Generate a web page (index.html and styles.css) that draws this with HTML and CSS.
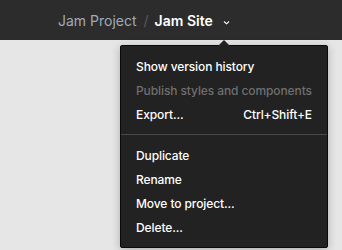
FILE: index.html
```html
<!DOCTYPE html>
<html>
<head>
<meta charset="utf-8">
<link rel="stylesheet" href="styles.css">
</head>
<body>
<header class="topbar">
  <span class="crumb">Jam Project</span>
  <span class="sep">/</span>
  <span class="current">Jam Site</span>
  <svg class="chev" width="7" height="5" viewBox="0 0 7 5"><path d="M1 1.5 L3.5 3.8 L6 1.5" fill="none" stroke="#fff" stroke-width="1.1"/></svg>
</header>
<main class="canvas">
  <div class="menu">
    <span class="arrow"></span>
    <div class="item">Show version history</div>
    <div class="item disabled">Publish styles and components</div>
    <div class="item"><span>Export...</span><span class="kbd">Ctrl+Shift+E</span></div>
    <div class="divider"></div>
    <div class="item">Duplicate</div>
    <div class="item">Rename</div>
    <div class="item">Move to project...</div>
    <div class="item">Delete...</div>
  </div>
</main>
</body>
</html>
```
FILE: styles.css
```css
* { box-sizing: border-box; }
html, body { margin: 0; padding: 0; }
body {
  width: 342px;
  height: 250px;
  overflow: hidden;
  background: #e6e6e6;
  font-family: Inter, "Liberation Sans", sans-serif;
}
.topbar {
  height: 40px;
  background: #2c2c2c;
  display: flex;
  align-items: center;
  padding-left: 58px;
  font-size: 14px;
}
.crumb { color: #9fabb7; }
.sep { color: #5a5a5a; margin: 0 6px 0 7px; }
.current { color: #fff; font-weight: 600; }
.chev { margin-left: 10px; margin-top: 5px; }
.canvas {
  padding: 5px 0 0 120px;
}
.menu {
  position: relative;
  width: 208px;
  background: #222222;
  border: 1px solid #0a0a0a;
  border-radius: 2px;
  box-shadow: 0 2px 8px rgba(0,0,0,0.25);
  padding: 8px 0 8px;
}
.arrow {
  position: absolute;
  top: -6px;
  left: 97px;
  width: 0;
  height: 0;
  border-left: 6px solid transparent;
  border-right: 6px solid transparent;
  border-bottom: 6px solid #222222;
}
.item {
  height: 24px;
  display: flex;
  align-items: center;
  justify-content: space-between;
  padding: 0 15px 0 15px;
  color: #ffffff;
  font-size: 12px;
  font-weight: 500;
  white-space: nowrap;
  letter-spacing: -0.1px;
}
.item.disabled { color: #6f6f6f; }
.kbd { color: #fff; }
.divider {
  height: 1px;
  background: #474747;
  margin: 8px 0;
}
```
